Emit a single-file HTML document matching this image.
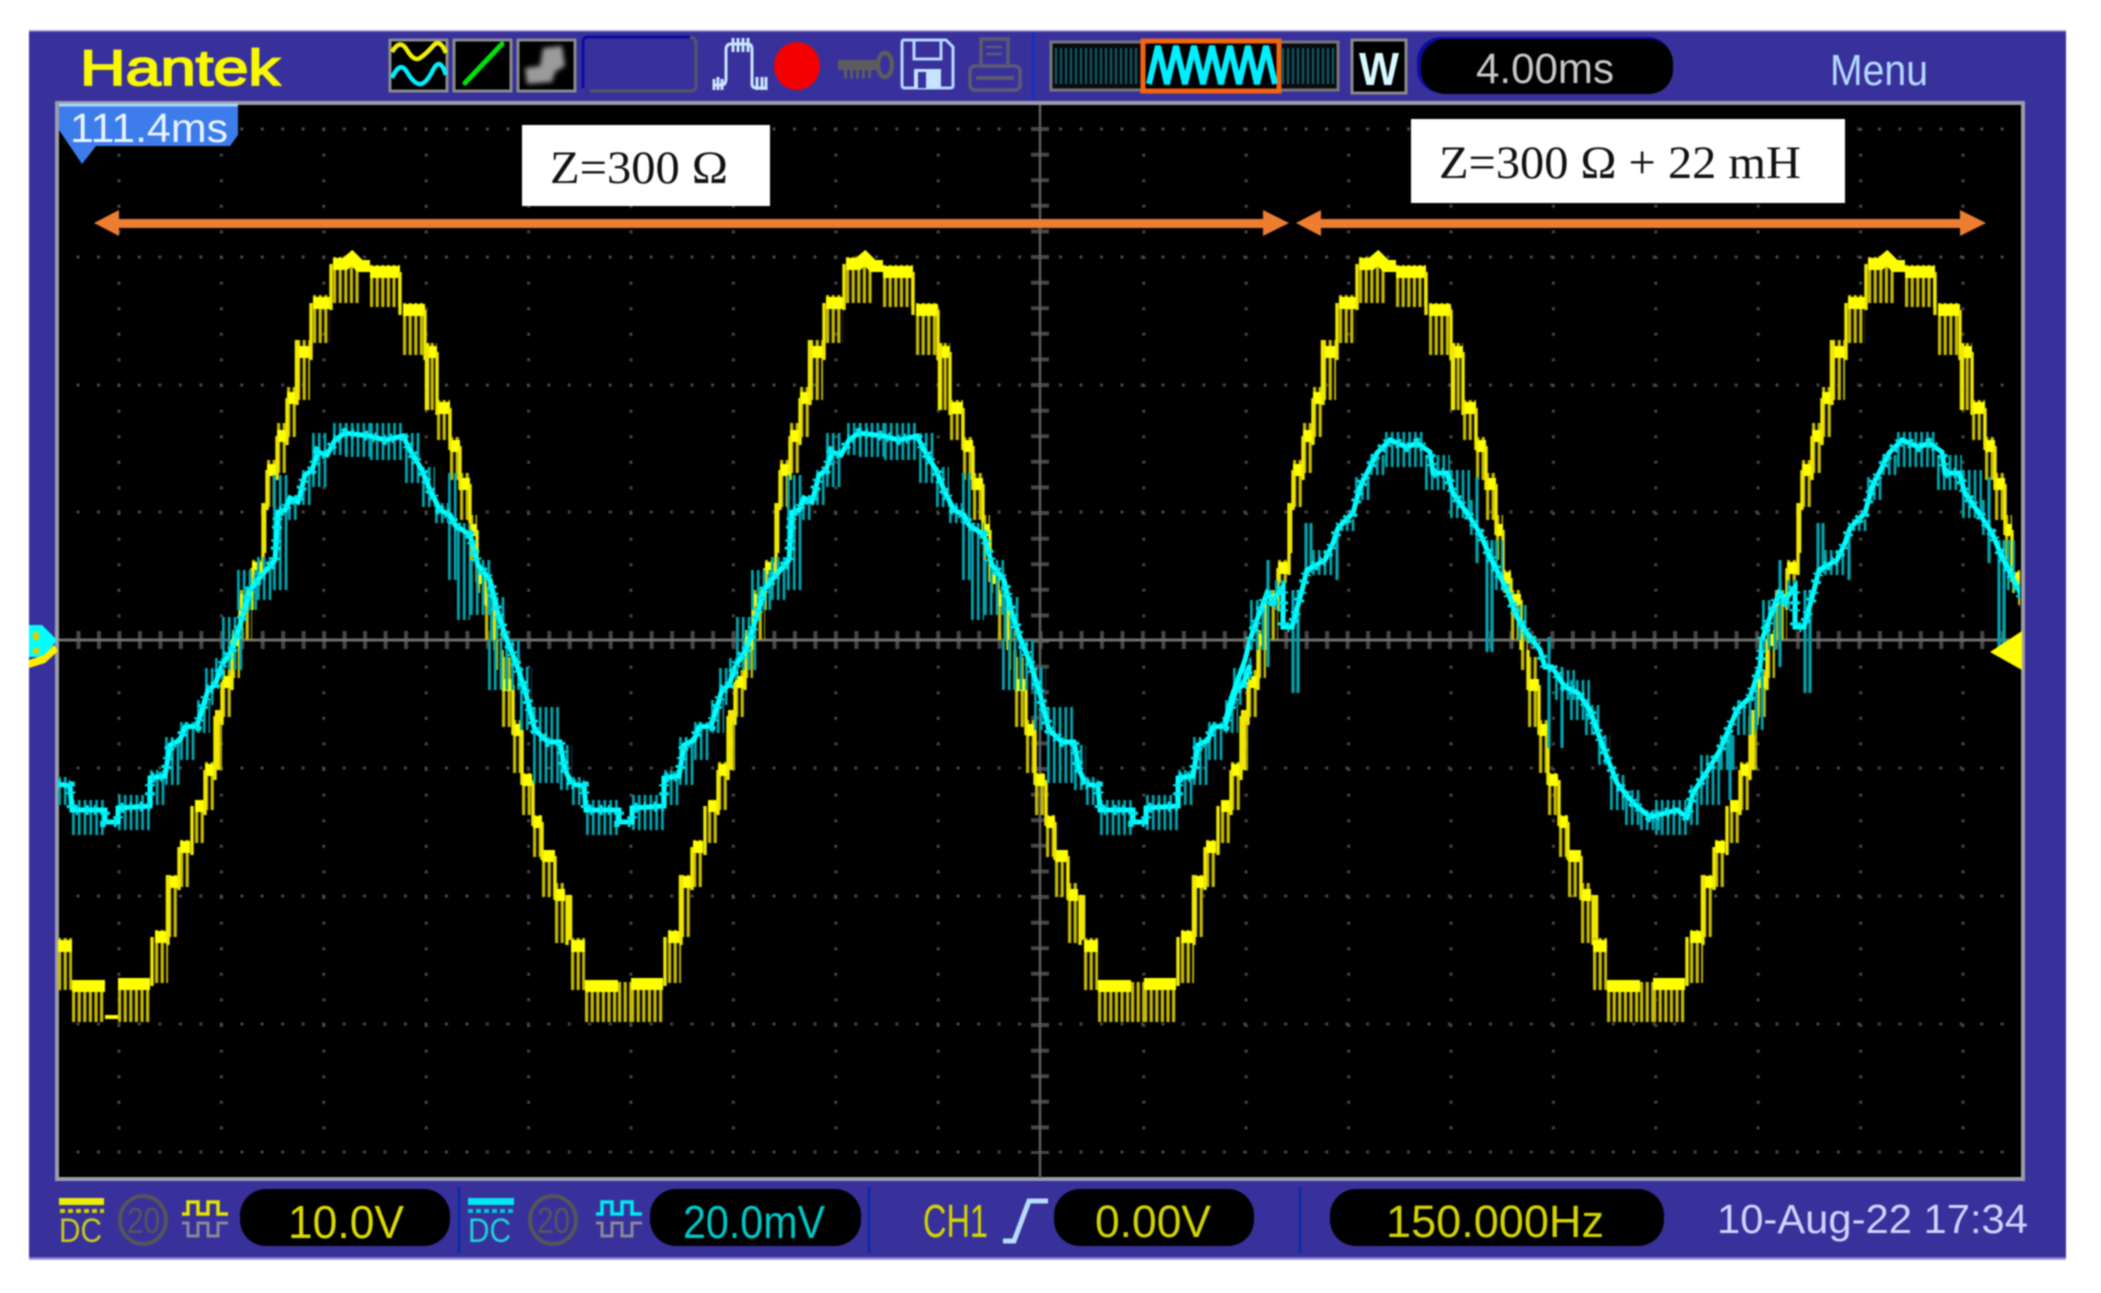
<!DOCTYPE html>
<html>
<head>
<meta charset="utf-8">
<style>
html,body{margin:0;padding:0;background:#fff;width:2101px;height:1293px;overflow:hidden}
svg{display:block;filter:blur(.9px)}
text{font-family:"Liberation Sans",sans-serif}
.serif{font-family:"Liberation Serif",serif;fill:#111;font-size:47px}
.ys path{fill:none;stroke:#c6ba00;stroke-dasharray:3.2 2.4}
.cs path{fill:none;stroke:#00a4b0;stroke-dasharray:2.8 3}
.pill{fill:#000}
</style>
</head>
<body>
<svg xmlns="http://www.w3.org/2000/svg" width="2101" height="1293" viewBox="0 0 2101 1293">
<defs>
<clipPath id="scr"><rect x="58" y="105" width="1962" height="1073"/></clipPath>
<path id="pa1" d="M58 784L70 786L72 810H105L105 822H118L118 808L150 806L150 778L165 776L170 745L180 740L185 727L197 726L205 700L208 690L215 685L222 665"/>
<path id="pa2" d="M222 665L232 650L240 625L250 590L262 575L275 560L278 512L285 510L290 498L298 502L305 475L312 470L318 452L327 455L335 440L345 433L370 436L385 440L403 436L410 450L422 470L430 490L440 510L450 515L455 525L470 535L478 565L490 580L497 610L505 635L515 660L525 690L535 730L548 742L560 742L565 770L572 784"/>
<path id="pb" d="M1250 640L1258 617L1267 593L1273 600L1283 587L1283 627L1292 627L1302 590L1307 570L1325 560L1333 543L1338 528L1353 513L1360 487L1370 467L1377 453L1390 440L1407 447L1417 443L1430 452L1433 473L1447 473L1453 493L1467 513L1480 533L1490 557L1507 590L1517 617L1527 633L1540 650L1545 667L1552 667L1565 687L1578 693L1590 710L1603 747L1617 783L1633 803L1650 817L1677 810L1687 817L1693 793L1710 767L1720 750L1737 710L1750 697L1760 667L1762 640"/>
<g id="yc">
 <g class="ys">
  <path stroke-width="52" d="M58 964H72"/><path stroke-width="40" d="M72 1002H105"/><path stroke-width="44" d="M118 1000H150"/>
  <path stroke-width="53" d="M155 956.5H168"/><path stroke-width="62" d="M168 906H178"/><path stroke-width="47" d="M180 863.5H190"/>
  <path stroke-width="43" d="M195 821.5H205"/><path stroke-width="48" d="M205 786H215"/><path stroke-width="60" d="M215 740H222"/>
  <path stroke-width="47" d="M222 693.5H232"/><path stroke-width="48" d="M232 654H240"/><path stroke-width="50" d="M240 615H252"/>
  <path stroke-width="23" d="M252 571.5H262"/><path stroke-width="50" d="M263 528H267"/><path stroke-width="47" d="M267 483.5H277"/>
  <path stroke-width="50" d="M277 448H287"/><path stroke-width="50" d="M287 412H297"/><path stroke-width="60" d="M297 370H310"/>
  <path stroke-width="48" d="M313 319H330"/><path stroke-width="46" d="M333 280H360"/><path stroke-width="42" d="M370 286H400"/>
  <path stroke-width="52" d="M403 329H425"/><path stroke-width="67" d="M425 376.5H437"/><path stroke-width="40" d="M437 420H450"/>
  <path stroke-width="43" d="M450 458.5H460"/><path stroke-width="47" d="M460 496.5H470"/><path stroke-width="45" d="M470 537.5H477"/>
  <path stroke-width="23" d="M477 581.5H485"/><path stroke-width="50" d="M485 615H495"/><path stroke-width="40" d="M495 650H502"/>
  <path stroke-width="70" d="M502 692H513"/><path stroke-width="53" d="M513 746.5H522"/><path stroke-width="42" d="M522 794H532"/>
  <path stroke-width="42" d="M533 836H542"/><path stroke-width="47" d="M542 873.5H555"/><path stroke-width="60" d="M555 913H565"/>
 </g>
 <path fill="none" stroke="#ffff00" stroke-width="12" d="M58 946H72M72 986H105M118 984H150M155 937H168M168 882H178M180 847H190M195 806H205M205 770H215M215 716H222M222 682H232M232 640H240M240 600H252M252 568H262M267 470H277M277 436H287M287 398H297M297 352H310M313 303H330M333 264H345L352 258L360 266H370M370 272H400M403 310H425M425 352H437M437 408H450M450 446H460M460 484H470M470 530H477M477 578H485M485 600H495M502 685H513M513 730H522M522 780H532M533 822H542M542 856H555M555 895H565"/>
 <path fill="none" stroke="#f0e800" stroke-width="3.4" d="M152 937V986M168 882V945M179 847V890M192 806V855M205 770V815M215 716V780M222 682V725M232 640V690M240 600V650M252 568V610M263 503V575M267 470V510M277 436V480M287 398V445M297 352V405M311 303V360M331 264V310M400 272V315M425 310V360M437 352V415M450 408V450M460 446V490M470 484V535M477 530V582M485 578V605M495 600V650M502 650V690M513 685V735M522 730V785M533 780V826M542 822V860M555 856V900M567 895V945"/>
 <path fill="none" stroke="#f0e800" stroke-width="4.5" d="M264 503V553M218 710V770M570 895V940M168 875V937M297 340V400M427 343V410"/>
</g>
<g id="a1">
 <g class="cs">
  <path stroke-width="28" d="M58 791H70"/><path stroke-width="35" d="M72 817.5H105"/><path stroke-width="35" d="M118 812.5H150"/>
  <path stroke-width="35" d="M150 787.5H165"/><path stroke-width="48" d="M165 761H180"/><path stroke-width="38" d="M180 741H197"/>
  <path stroke-width="33" d="M197 716.5H210"/><path stroke-width="37" d="M205 686.5H215"/><path stroke-width="22" d="M215 669H225"/>
 </g>
 <use href="#pa1" fill="none" stroke="#00ffff" stroke-width="5"/>
 <use href="#pa1" fill="none" stroke="#00e8f0" stroke-width="10" stroke-dasharray="2 8 3 5 2 11 3 6"/>
</g>
<g id="a2">
 <g class="cs">
  <path stroke-width="53" d="M222 643.5H243"/><path stroke-width="40" d="M237 590H257"/><path stroke-width="43" d="M257 578.5H273"/>
  <path stroke-width="115" d="M273 532.5H288"/><path stroke-width="25" d="M288 507.5H298"/><path stroke-width="35" d="M302 487.5H312"/>
  <path stroke-width="54" d="M312 460H327"/><path stroke-width="32" d="M333 439H345"/><path stroke-width="34" d="M345 440H370"/>
  <path stroke-width="37" d="M370 441.5H403"/><path stroke-width="50" d="M405 458H422"/><path stroke-width="40" d="M422 487H435"/>
  <path stroke-width="20" d="M435 513H448"/><path stroke-width="107" d="M448 526.5H457"/><path stroke-width="97" d="M457 571.5H470"/>
  <path stroke-width="55" d="M470 587.5H493"/><path stroke-width="43" d="M490 618.5H507"/><path stroke-width="50" d="M488 665H520"/>
  <path stroke-width="63" d="M520 698.5H532"/><path stroke-width="76" d="M533 745H560"/><path stroke-width="45" d="M560 767.5H572"/>
 </g>
 <use href="#pa2" fill="none" stroke="#00ffff" stroke-width="5"/>
 <use href="#pa2" fill="none" stroke="#00e8f0" stroke-width="10" stroke-dasharray="2 8 3 5 2 11 3 6"/>
</g>
<g id="b">
 <g class="cs">
  <path stroke-width="50" d="M1250 625H1265"/><path stroke-width="30" d="M1275 595H1285"/>
  <path stroke-width="25" d="M1312 562.5H1335"/>
  <path stroke-width="12" d="M1340 525H1355"/><path stroke-width="23" d="M1355 488.5H1370"/>
  <path stroke-width="20" d="M1370 465H1385"/><path stroke-width="35" d="M1385 449.5H1425"/><path stroke-width="35" d="M1425 472.5H1450"/>
  <path stroke-width="48" d="M1450 494H1470"/><path stroke-width="35" d="M1470 517.5H1478"/>
  <path stroke-width="50" d="M1495 565H1503"/><path stroke-width="35" d="M1518 622.5H1528"/>
  <path stroke-width="30" d="M1555 685H1575"/>
  <path stroke-width="40" d="M1570 700H1590"/><path stroke-width="30" d="M1585 720H1600"/><path stroke-width="30" d="M1598 750H1610"/>
  <path stroke-width="35" d="M1610 792.5H1625"/><path stroke-width="35" d="M1625 807.5H1640"/><path stroke-width="20" d="M1640 820H1660"/>
  <path stroke-width="35" d="M1655 817.5H1690"/><path stroke-width="40" d="M1690 805H1700"/><path stroke-width="50" d="M1700 780H1720"/>
  <path stroke-width="35" d="M1720 752.5H1735"/><path stroke-width="35" d="M1737 717.5H1755"/>
  <path stroke-width="60" d="M1755 700H1765"/>
 </g>
 <path fill="none" stroke="#00a4b0" stroke-width="3.2" d="M1268 560V667M1293 590V693M1298 590V693M1306 523V573M1311 523V573M1337 533V580M1477 477V563M1487 540V652M1492 540V652M1549 637V748M1562 667V748M1730 727V800"/>
 <use href="#pb" fill="none" stroke="#00ffff" stroke-width="5"/>
 <use href="#pb" fill="none" stroke="#00e8f0" stroke-width="10" stroke-dasharray="2 8 3 5 2 11 3 6"/>
</g>
</defs>

<rect width="2101" height="1293" fill="#fff"/>
<!-- panel -->
<rect x="29" y="31" width="2037" height="1228" fill="#38319b"/>
<path d="M29 31H2066" stroke="#8c88cc" stroke-width="1.5"/>
<path d="M29 1258.5H2066" stroke="#9088d0" stroke-width="2.5"/>

<!-- header -->
<text x="80" y="85" font-size="50" fill="#f8f800" stroke="#f8f800" stroke-width="1.8" textLength="200" lengthAdjust="spacingAndGlyphs">Hantek</text>

<rect x="390" y="40" width="57" height="51" fill="#000" stroke="#8a8a8a" stroke-width="3"/>
<path d="M392 52Q400 38 407 50T420 58T433 46T446 53" fill="none" stroke="#f4f000" stroke-width="4.5"/>
<path d="M392 78Q400 60 407 72T420 84T433 70T446 75" fill="none" stroke="#00f0ff" stroke-width="4.5"/>
<rect x="454" y="40" width="57" height="51" fill="#000" stroke="#8a8a8a" stroke-width="3"/>
<path d="M465 83L502 44" stroke="#00e010" stroke-width="5" stroke-linecap="round"/>
<rect x="518" y="40" width="57" height="51" fill="#000" stroke="#8a8a8a" stroke-width="3"/>
<path d="M525 68L540 66L543 48L562 46L565 66L555 72L552 82L527 84Z" fill="#9a9a9a" style="filter:blur(2.5px)"/>
<path d="M583 88V42Q583 37 589 37H690" fill="none" stroke="#0c0c9e" stroke-width="3"/>
<path d="M690 37Q696 38 696 44V86Q696 91 690 91H590" fill="none" stroke="#55556a" stroke-width="3"/>

<path d="M714 90V79M718 90V77M722 90V79M713 85H722Q726 85 726 78V50Q726 44 731 44H748Q752 44 752 50V84Q752 88 757 88H767M757 90V77M762 90V77M766 90V77M733 38V52M738 38V52M743 38V52M748 38V52" fill="none" stroke="#c8e4ff" stroke-width="3"/>
<ellipse cx="797" cy="66" rx="23" ry="24" fill="#f40000"/>
<path d="M838 65H878" stroke="#5c5c5c" stroke-width="10"/>
<path d="M844 74H872" stroke="#5c5c5c" stroke-width="9" stroke-dasharray="3 3"/>
<ellipse cx="885" cy="65" rx="7" ry="12" fill="none" stroke="#5c5c5c" stroke-width="4.5"/>
<path d="M904 40H946L953 47V86Q953 88 950 88H905Q902 88 902 85V43Q902 40 904 40Z" fill="#38319b" stroke="#b6d6ff" stroke-width="3"/>
<rect x="914" y="40" width="27" height="19" fill="none" stroke="#b6d6ff" stroke-width="3"/>
<rect x="914" y="69" width="27" height="19" fill="#c4e4ff"/>
<rect x="918" y="72" width="8" height="16" fill="#38319b"/>
<rect x="981" y="39" width="27" height="27" fill="none" stroke="#5b5b70" stroke-width="3.5"/>
<path d="M986 47H1002M986 54H1002" stroke="#5b5b70" stroke-width="2.5"/>
<rect x="970" y="66" width="50" height="24" rx="5" fill="none" stroke="#5b5b70" stroke-width="3.5"/>
<path d="M976 78H1014" stroke="#5b5b70" stroke-width="4"/>
<path d="M1033 32V100" stroke="#1230c8" stroke-width="2.5"/>

<!-- timebase strip -->
<rect x="1051" y="42" width="287" height="48" fill="#0a0a10" stroke="#777" stroke-width="3"/>
<path d="M1055 66H1140M1282 66H1335" stroke="#0c5f68" stroke-width="36" stroke-dasharray="2 3" fill="none"/>
<rect x="1143" y="41" width="136" height="50" fill="#000" stroke="#f26410" stroke-width="5"/>
<path d="M1149 84L1158 46L1167 84L1176 46L1185 84L1194 46L1203 84L1212 46L1221 84L1230 46L1239 84L1248 46L1257 84L1266 46L1275 84" fill="none" stroke="#00eeff" stroke-width="6"/>
<rect x="1352" y="40" width="54" height="53" fill="#000" stroke="#8a8a8a" stroke-width="3"/>
<text x="1359" y="85" font-size="46" font-weight="700" fill="#d8fbff" textLength="40" lengthAdjust="spacingAndGlyphs">W</text>
<rect x="1417" y="37" width="255" height="56" rx="24" fill="#0c0ca0"/>
<rect x="1421" y="39" width="252" height="55" rx="24" fill="#000"/>
<text x="1476" y="83" font-size="43" fill="#c8c8c8" textLength="138" lengthAdjust="spacingAndGlyphs">4.00ms</text>
<text x="1830" y="85" font-size="44" fill="#b4d8ff" textLength="98" lengthAdjust="spacingAndGlyphs">Menu</text>

<!-- screen -->
<rect x="57" y="103" width="1966" height="1076" fill="#000" stroke="#9c9caa" stroke-width="4"/>
<g fill="none" stroke="#474747">
 <path stroke-width="3" stroke-dasharray="3 17.47" d="M76.5 129H2012M76.5 257H2012M76.5 385H2012M76.5 512H2012M76.5 768H2012M76.5 896H2012M76.5 1024H2012M76.5 1152H2012"/>
 <path stroke-width="3" stroke-dasharray="3 22.6" d="M119 128V1153M221.4 128V1153M323.8 128V1153M426.2 128V1153M528.6 128V1153M631 128V1153M733.4 128V1153M835.8 128V1153M938.2 128V1153M1143.8 128V1153M1246.2 128V1153M1348.6 128V1153M1451 128V1153M1553.4 128V1153M1655.8 128V1153M1758.2 128V1153M1860.6 128V1153M1963 128V1153"/>
 <path stroke-width="18" stroke-dasharray="4 16.47" d="M76.5 640H2012"/>
 <path stroke-width="18" stroke-dasharray="4 21.6" d="M1040 127V1154"/>
</g>
<path d="M59 640H2020" stroke="#6e6e6e" stroke-width="3"/>
<path d="M1040 105V1178" stroke="#5e5e5e" stroke-width="2.5"/>

<!-- waveforms -->
<g clip-path="url(#scr)">
 <use href="#yc"/>
 <use href="#yc" x="513"/>
 <use href="#yc" x="1026"/>
 <use href="#yc" x="1535"/>
 <g class="ys"><path stroke-width="40" d="M618 1002H631M1131 1002H1144M1640 1002H1653"/></g>
 <path d="M105 1017H118" stroke="#ff0" stroke-width="4"/>
 <use href="#a1"/><use href="#a2"/>
 <use href="#a1" x="514"/><use href="#a2" x="514"/>
 <use href="#a1" x="1028"/>
 <path d="M1250 640L1245 660L1233 693L1225 722" fill="none" stroke="#00ffff" stroke-width="5"/>
 <use href="#b"/>
 <use href="#b" x="512"/>
</g>

<!-- time tag -->
<path d="M59 104H238V135L230 146H96L82 164L59 130Z" fill="#3d7ceb"/>
<path d="M59 105H238" stroke="#a6d4ff" stroke-width="3"/>
<text x="70" y="142" font-size="41" fill="#e8f4ff" textLength="158" lengthAdjust="spacingAndGlyphs">111.4ms</text>

<!-- labels -->
<rect x="522" y="125" width="248" height="81" fill="#fff"/>
<text class="serif" x="550" y="183" textLength="178" lengthAdjust="spacingAndGlyphs">Z=300 Ω</text>
<rect x="1411" y="119" width="434" height="84" fill="#fff"/>
<text class="serif" x="1439" y="178" textLength="362" lengthAdjust="spacingAndGlyphs">Z=300 Ω + 22 mH</text>

<!-- arrows -->
<g fill="#ed7d31">
 <path d="M94 223L119 210V219H1263V210L1289 223L1263 236V228H119V236Z"/>
 <path d="M1296 223L1321 210V219H1960V210L1986 223L1960 236V228H1321V236Z"/>
</g>

<!-- markers -->
<path d="M29 625H42L57 640L44 657H29Z" fill="#00ffff"/>
<path d="M33 632h6v8h-6zM33 648h6v6h-6z" fill="#d8d000"/>
<path d="M29 668L45 663L58 651L54 645L44 655L29 660Z" fill="#ffee00"/>
<path d="M1990 652L2022 631V670Z" fill="#ffff00"/>

<!-- bottom row CH1 -->
<rect x="59" y="1198" width="45" height="7" fill="#eeee00"/>
<path d="M60 1211H104" stroke="#d0d000" stroke-width="4" stroke-dasharray="5 3"/>
<text x="59" y="1242" font-size="34" fill="#c8c820" textLength="43" lengthAdjust="spacingAndGlyphs">DC</text>
<ellipse cx="143" cy="1220" rx="23" ry="24" fill="none" stroke="#55555a" stroke-width="4"/>
<text x="127" y="1233" font-size="36" fill="#55555a" textLength="33" lengthAdjust="spacingAndGlyphs">20</text>
<path d="M182 1214H188V1202H198V1214H208V1202H218V1214H228" fill="none" stroke="#e4e400" stroke-width="3.5"/>
<path d="M182 1223H188V1236H198V1223H208V1236H218V1223H228" fill="none" stroke="#88889a" stroke-width="3"/>
<rect x="240" y="1189" width="210" height="57" rx="26" class="pill"/>
<text x="288" y="1238" font-size="46" fill="#dcdc00" textLength="116" lengthAdjust="spacingAndGlyphs">10.0V</text>
<path d="M459 1187V1253" stroke="#0e2aa8" stroke-width="3"/>

<!-- CH2 -->
<rect x="468" y="1198" width="46" height="7" fill="#00e8f0"/>
<path d="M468 1211H514" stroke="#00c8d0" stroke-width="4" stroke-dasharray="5 3"/>
<text x="468" y="1242" font-size="34" fill="#20d0d8" textLength="43" lengthAdjust="spacingAndGlyphs">DC</text>
<ellipse cx="553" cy="1220" rx="23" ry="24" fill="none" stroke="#55555a" stroke-width="4"/>
<text x="537" y="1233" font-size="36" fill="#55555a" textLength="33" lengthAdjust="spacingAndGlyphs">20</text>
<path d="M596 1214H602V1202H612V1214H622V1202H632V1214H642" fill="none" stroke="#00e8f0" stroke-width="3.5"/>
<path d="M596 1223H602V1236H612V1223H622V1236H632V1223H642" fill="none" stroke="#88889a" stroke-width="3"/>
<rect x="650" y="1189" width="211" height="57" rx="26" class="pill"/>
<text x="683" y="1238" font-size="46" fill="#00c8c8" textLength="142" lengthAdjust="spacingAndGlyphs">20.0mV</text>
<path d="M869 1187V1253" stroke="#0e2aa8" stroke-width="3"/>

<!-- trigger -->
<text x="923" y="1237" font-size="46" fill="#d4d400" textLength="65" lengthAdjust="spacingAndGlyphs">CH1</text>
<path d="M1003 1241H1014L1029 1201H1048" fill="none" stroke="#b8dcff" stroke-width="5"/>
<rect x="1054" y="1189" width="200" height="57" rx="26" class="pill"/>
<text x="1095" y="1237" font-size="45" fill="#d4d400" textLength="116" lengthAdjust="spacingAndGlyphs">0.00V</text>
<path d="M1300 1187V1253" stroke="#0e2aa8" stroke-width="3"/>
<rect x="1330" y="1189" width="334" height="57" rx="26" class="pill"/>
<text x="1386" y="1237" font-size="45" fill="#d4d400" textLength="218" lengthAdjust="spacingAndGlyphs">150.000Hz</text>
<text x="1717" y="1233" font-size="41" fill="#cdd4ff" textLength="311" lengthAdjust="spacingAndGlyphs">10-Aug-22 17:34</text>
</svg>
</body>
</html>
